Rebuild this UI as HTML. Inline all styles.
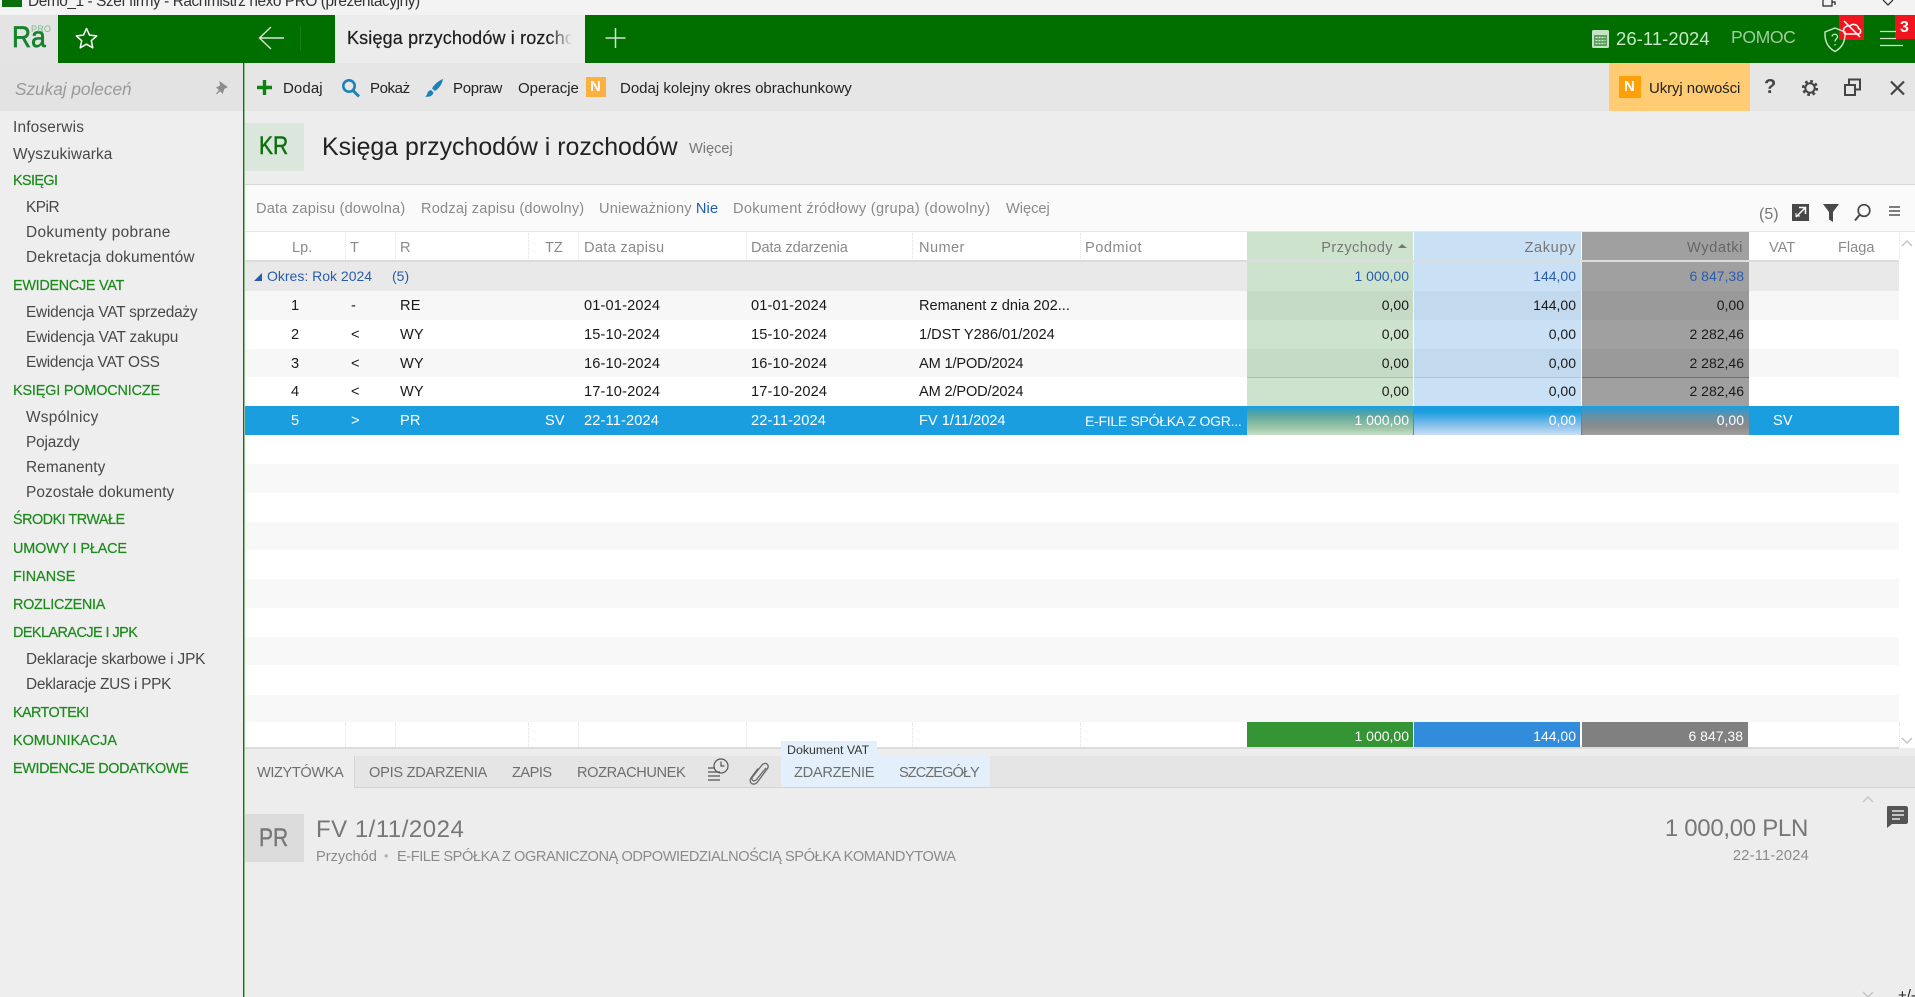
<!DOCTYPE html>
<html lang="pl">
<head>
<meta charset="utf-8">
<title>Księga przychodów i rozchodów</title>
<style>
html,body{margin:0;padding:0;width:1915px;height:997px;overflow:hidden;background:#ededed}
body{position:relative;font-family:"Liberation Sans",sans-serif}
.b{position:absolute}
.t{position:absolute;white-space:nowrap;line-height:20px;height:20px;font-size:15px}
.r{text-align:right}
.s{font-size:15.4px;color:#484848;left:26px}
.h{font-size:14.4px;color:#1c8a1c;left:13px;-webkit-text-stroke:.2px #1c8a1c}
.f{font-size:14.6px;color:#8a8a8a;top:199px}
.c{font-size:14.6px;color:#8a8a8a;top:238px}
.d{color:#1a1a1a;font-size:14.6px;letter-spacing:.15px}
.n{color:#1a1a1a;font-size:14px;text-align:right}
.w{color:#fff}
.g{color:#2a5cad;font-size:14px}
.k{font-size:14.6px;color:#6e6e6e;top:763px}
.sep{position:absolute;width:0;border-left:1px dotted #e2e2e2}
svg{position:absolute;left:0;top:0}
</style>
</head>
<body>
<!-- window title bar -->
<div class="b" style="left:0;top:0;width:1915px;height:15px;background:#f3f3f3;overflow:hidden">
  <div class="b" style="left:2px;top:-8px;width:20px;height:15px;background:#0a6f0a"></div>
  <div class="t" style="left:28px;top:-8px;font-size:15.4px;letter-spacing:-.42px;color:#333">Demo_1 - Szef firmy - Rachmistrz nexo PRO (prezentacyjny)</div>
</div>
<!-- green top bar -->
<div class="b" style="left:0;top:15px;width:1915px;height:48px;background:#006f00"></div>
<div class="b" style="left:0;top:15px;width:58px;height:48px;background:#e4e4e4"></div>
<div class="t" style="left:12px;top:22px;font-size:30px;line-height:31px;height:31px;color:#14852d;-webkit-text-stroke:.7px #14852d;transform:scaleX(.88);transform-origin:left center">Ra</div>
<div class="t" style="left:31px;top:24px;font-size:9px;line-height:10px;height:10px;letter-spacing:.2px;color:#7fba8c">PRO</div>
<div class="b" style="left:335px;top:15px;width:250px;height:48px;background:#ececec;overflow:hidden">
  <div class="t" style="left:12px;top:13px;font-size:18px;letter-spacing:.15px;color:#1d1d1d;-webkit-text-stroke:.2px #1d1d1d">Księga przychodów i rozchodów</div>
  <div class="b" style="left:214px;top:0;width:36px;height:48px;background:linear-gradient(90deg,rgba(236,236,236,0),#ececec 65%)"></div>
</div>
<div class="t" style="left:1616px;top:29px;font-size:18.4px;letter-spacing:.1px;color:#c8e8c8">26-11-2024</div>
<div class="t" style="left:1731px;top:27px;font-size:17.600px;letter-spacing:-.4px;color:#9ecb9e">POMOC</div>
<div class="b" style="left:1839px;top:15px;width:25px;height:25px;background:#f0141e"></div>
<div class="b" style="left:1895px;top:15px;width:20px;height:24px;background:#f0141e"></div>
<div class="t" style="left:1900px;top:18px;font-size:16px;font-weight:bold;color:#fff">3</div>

<!-- sidebar -->
<div class="b" style="left:0;top:63px;width:243px;height:934px;background:#eeeeee"></div>
<div class="b" style="left:0;top:63px;width:243px;height:48px;background:#e3e3e3"></div>
<div class="b" style="left:243px;top:63px;width:1px;height:934px;background:#0a780a"></div>
<div class="b" style="left:244px;top:63px;width:1px;height:934px;background:#8fbf8f"></div>
<div class="t" style="left:15px;top:79px;font-size:17.2px;font-style:italic;color:#9a9a9a">Szukaj poleceń</div>
<div class="t s" style="left:13px;top:118px;letter-spacing:.18px">Infoserwis</div>
<div class="t s" style="left:13px;top:145px;letter-spacing:.1px">Wyszukiwarka</div>
<div class="t h" style="top:171px;letter-spacing:-.6px">KSIĘGI</div>
<div class="t s" style="top:198px;letter-spacing:-.5px">KPiR</div>
<div class="t s" style="top:223px;letter-spacing:.36px">Dokumenty pobrane</div>
<div class="t s" style="top:248px;letter-spacing:.17px">Dekretacja dokumentów</div>
<div class="t h" style="top:276px;letter-spacing:-.28px">EWIDENCJE VAT</div>
<div class="t s" style="top:303px;letter-spacing:-.21px">Ewidencja VAT sprzedaży</div>
<div class="t s" style="top:328px;letter-spacing:-.18px">Ewidencja VAT zakupu</div>
<div class="t s" style="top:353px;letter-spacing:-.29px">Ewidencja VAT OSS</div>
<div class="t h" style="top:381px;letter-spacing:-.15px">KSIĘGI POMOCNICZE</div>
<div class="t s" style="top:408px;letter-spacing:.27px">Wspólnicy</div>
<div class="t s" style="top:433px;letter-spacing:-.17px">Pojazdy</div>
<div class="t s" style="top:458px;letter-spacing:.07px">Remanenty</div>
<div class="t s" style="top:483px;letter-spacing:.06px">Pozostałe dokumenty</div>
<div class="t h" style="top:510px;letter-spacing:-.5px">ŚRODKI TRWAŁE</div>
<div class="t h" style="top:539px;letter-spacing:-.14px">UMOWY I PŁACE</div>
<div class="t h" style="top:567px">FINANSE</div>
<div class="t h" style="top:595px;letter-spacing:-.28px">ROZLICZENIA</div>
<div class="t h" style="top:623px;letter-spacing:-.53px">DEKLARACJE I JPK</div>
<div class="t s" style="top:650px;letter-spacing:-.15px">Deklaracje skarbowe i JPK</div>
<div class="t s" style="top:675px;letter-spacing:-.27px">Deklaracje ZUS i PPK</div>
<div class="t h" style="top:703px;letter-spacing:-.6px">KARTOTEKI</div>
<div class="t h" style="top:731px">KOMUNIKACJA</div>
<div class="t h" style="top:759px;letter-spacing:-.35px">EWIDENCJE DODATKOWE</div>

<!-- toolbar -->
<div class="b" style="left:245px;top:63px;width:1670px;height:48px;background:#e6e6e6"></div>
<div class="t" style="left:283px;top:79px;color:#222;letter-spacing:.1px">Dodaj</div>
<div class="t" style="left:370px;top:79px;color:#222;letter-spacing:-.4px">Pokaż</div>
<div class="t" style="left:453px;top:79px;color:#222;letter-spacing:-.3px">Popraw</div>
<div class="t" style="left:518px;top:79px;color:#222">Operacje</div>
<div class="b" style="left:586px;top:77px;width:20px;height:20px;background:#fbb040"></div>
<div class="t" style="left:590px;top:77px;font-weight:bold;font-size:15px;color:#fff">N</div>
<div class="t" style="left:620px;top:79px;color:#222">Dodaj kolejny okres obrachunkowy</div>
<div class="b" style="left:1609px;top:63px;width:141px;height:48px;background:#ffcb73"></div>
<div class="b" style="left:1619px;top:76px;width:22px;height:22px;background:#ff9f0a"></div>
<div class="t" style="left:1624px;top:77px;font-weight:bold;font-size:15px;color:#fff">N</div>
<div class="t" style="left:1649px;top:79px;color:#222;font-size:15px;letter-spacing:-.1px">Ukryj nowości</div>
<div class="t" style="left:1764px;top:77px;color:#444;font-size:20px;font-weight:bold">?</div>

<!-- page header -->
<div class="b" style="left:245px;top:111px;width:1670px;height:73px;background:#ededed"></div>
<div class="b" style="left:245px;top:184px;width:1670px;height:1px;background:#d6d6d6"></div>
<div class="b" style="left:245px;top:123px;width:59px;height:48px;background:#dbe7dc"></div>
<div class="t" style="left:259px;top:136px;font-size:25px;color:#0e6f0e;-webkit-text-stroke:.5px #0e6f0e;transform:scaleX(.84);transform-origin:left center">KR</div>
<div class="t" style="left:322px;top:137px;font-size:24.9px;color:#222">Księga przychodów i rozchodów</div>
<div class="t" style="left:689px;top:139px;font-size:14.6px;color:#777">Więcej</div>

<!-- filter row -->
<div class="b" style="left:245px;top:185px;width:1670px;height:47px;background:#fafafa"></div>
<div class="t f" style="left:256px;letter-spacing:.2px">Data zapisu (dowolna)</div>
<div class="t f" style="left:421px;letter-spacing:.19px">Rodzaj zapisu (dowolny)</div>
<div class="t f" style="left:599px;letter-spacing:.15px">Unieważniony <span style="color:#1a5fb4">Nie</span></div>
<div class="t f" style="left:733px;letter-spacing:.31px">Dokument źródłowy (grupa) (dowolny)</div>
<div class="t f" style="left:1006px">Więcej</div>
<div class="t" style="left:1759px;top:205px;font-size:16px;color:#777">(5)</div>

<!-- table background -->
<div class="b" style="left:245px;top:232px;width:1670px;height:516px;background:#fff"></div>
<div class="b" style="left:245px;top:231px;width:1670px;height:1px;background:#e6e6e6"></div>
<div class="b" style="left:245px;top:261px;width:1654px;height:30px;background:#e9e9e9"></div>
<div class="b" style="left:245px;top:291px;width:1654px;height:29px;background:#f7f7f7"></div>
<div class="b" style="left:245px;top:349px;width:1654px;height:28px;background:#f7f7f7"></div>
<div class="b" style="left:245px;top:464px;width:1654px;height:29px;background:#f8f8f8"></div>
<div class="b" style="left:245px;top:522px;width:1654px;height:28px;background:#f8f8f8"></div>
<div class="b" style="left:245px;top:579px;width:1654px;height:29px;background:#f8f8f8"></div>
<div class="b" style="left:245px;top:637px;width:1654px;height:28px;background:#f8f8f8"></div>
<div class="b" style="left:245px;top:695px;width:1654px;height:27px;background:#f8f8f8"></div>

<!-- coloured columns -->
<div class="b" style="left:1247px;top:232px;width:166px;height:174px;background:#cde3cd"></div>
<div class="b" style="left:1414px;top:232px;width:167px;height:174px;background:#c9e0f5"></div>
<div class="b" style="left:1582px;top:232px;width:167px;height:174px;background:#a0a0a0"></div>
<div class="b" style="left:1247px;top:291px;width:166px;height:29px;background:#c5dbc5"></div>
<div class="b" style="left:1414px;top:291px;width:167px;height:29px;background:#c3d9ee"></div>
<div class="b" style="left:1582px;top:291px;width:167px;height:29px;background:#9a9a9a"></div>
<div class="b" style="left:1247px;top:349px;width:166px;height:28px;background:#c5dbc5"></div>
<div class="b" style="left:1414px;top:349px;width:167px;height:28px;background:#c3d9ee"></div>
<div class="b" style="left:1582px;top:349px;width:167px;height:28px;background:#9a9a9a"></div>
<div class="b" style="left:1247px;top:377px;width:166px;height:1px;background:#a5c4a5"></div>
<div class="b" style="left:1414px;top:377px;width:167px;height:1px;background:#a3c7ea"></div>
<div class="b" style="left:1582px;top:377px;width:167px;height:1px;background:#6e6e6e"></div>
<div class="b" style="left:245px;top:260px;width:1654px;height:2px;background:#dcdcdc"></div>

<!-- selected row -->
<div class="b" style="left:245px;top:406px;width:1654px;height:29px;background:#1a9ee0"></div>
<div class="b" style="left:1247px;top:406px;width:166px;height:29px;background:linear-gradient(#1a9ee0,#5aa59c 30%,#9cc6a8 75%,#c6dfc6)"></div>
<div class="b" style="left:1414px;top:406px;width:167px;height:29px;background:linear-gradient(#1a9ee0,#1a9ee0 20%,#8fc3ec 70%,#c9e0f5)"></div>
<div class="b" style="left:1582px;top:406px;width:167px;height:29px;background:linear-gradient(#1a9ee0,#5e91ab 30%,#8b8b8b 70%,#a0a0a0)"></div>

<!-- header separators -->
<div class="sep" style="left:345px;top:233px;height:26px"></div>
<div class="sep" style="left:395px;top:233px;height:26px"></div>
<div class="sep" style="left:528px;top:233px;height:26px"></div>
<div class="sep" style="left:578px;top:233px;height:26px"></div>
<div class="sep" style="left:746px;top:233px;height:26px"></div>
<div class="sep" style="left:912px;top:233px;height:26px"></div>
<div class="sep" style="left:1080px;top:233px;height:26px"></div>
<div class="sep" style="left:1899px;top:233px;height:26px"></div>
<div class="sep" style="left:345px;top:723px;height:24px"></div>
<div class="sep" style="left:395px;top:723px;height:24px"></div>
<div class="sep" style="left:528px;top:723px;height:24px"></div>
<div class="sep" style="left:578px;top:723px;height:24px"></div>
<div class="sep" style="left:746px;top:723px;height:24px"></div>
<div class="sep" style="left:912px;top:723px;height:24px"></div>
<div class="sep" style="left:1080px;top:723px;height:24px"></div>
<div class="sep" style="left:1899px;top:723px;height:24px"></div>

<!-- column headers -->
<div class="t c" style="left:292px">Lp.</div>
<div class="t c" style="left:350px">T</div>
<div class="t c" style="left:400px">R</div>
<div class="t c" style="left:545px">TZ</div>
<div class="t c" style="left:584px;letter-spacing:.3px">Data zapisu</div>
<div class="t c" style="left:751px;letter-spacing:-.1px">Data zdarzenia</div>
<div class="t c" style="left:919px;letter-spacing:.4px">Numer</div>
<div class="t c" style="left:1085px;letter-spacing:.5px">Podmiot</div>
<div class="t c r" style="right:522px;color:#777;letter-spacing:.4px">Przychody</div>
<div class="t c r" style="right:339px;color:#777;letter-spacing:.6px">Zakupy</div>
<div class="t c r" style="right:172px;color:#666;letter-spacing:.6px">Wydatki</div>
<div class="t c" style="left:1769px">VAT</div>
<div class="t c" style="left:1838px">Flaga</div>

<!-- group row -->
<div class="t g" style="left:267px;top:266px">Okres: Rok 2024</div>
<div class="t g" style="left:392px;top:266px">(5)</div>
<div class="t n" style="right:506px;top:266px;color:#2a5cad">1 000,00</div>
<div class="t n" style="right:339px;top:266px;color:#2a5cad">144,00</div>
<div class="t n" style="right:171px;top:266px;color:#2a5cad">6 847,38</div>

<!-- row 1 -->
<div class="t d" style="left:291px;top:296px">1</div>
<div class="t d" style="left:351px;top:296px">-</div>
<div class="t d" style="left:400px;top:296px">RE</div>
<div class="t d" style="left:584px;top:296px">01-01-2024</div>
<div class="t d" style="left:751px;top:296px">01-01-2024</div>
<div class="t d" style="left:919px;top:296px;letter-spacing:0">Remanent z dnia 202...</div>
<div class="t n" style="right:506px;top:295px">0,00</div>
<div class="t n" style="right:339px;top:295px">144,00</div>
<div class="t n" style="right:171px;top:295px">0,00</div>
<!-- row 2 -->
<div class="t d" style="left:291px;top:325px">2</div>
<div class="t d" style="left:351px;top:325px">&lt;</div>
<div class="t d" style="left:400px;top:325px">WY</div>
<div class="t d" style="left:584px;top:325px">15-10-2024</div>
<div class="t d" style="left:751px;top:325px">15-10-2024</div>
<div class="t d" style="left:919px;top:325px;letter-spacing:0">1/DST Y286/01/2024</div>
<div class="t n" style="right:506px;top:324px">0,00</div>
<div class="t n" style="right:339px;top:324px">0,00</div>
<div class="t n" style="right:171px;top:324px">2 282,46</div>
<!-- row 3 -->
<div class="t d" style="left:291px;top:354px">3</div>
<div class="t d" style="left:351px;top:354px">&lt;</div>
<div class="t d" style="left:400px;top:354px">WY</div>
<div class="t d" style="left:584px;top:354px">16-10-2024</div>
<div class="t d" style="left:751px;top:354px">16-10-2024</div>
<div class="t d" style="left:919px;top:354px;letter-spacing:-.15px">AM 1/POD/2024</div>
<div class="t n" style="right:506px;top:353px">0,00</div>
<div class="t n" style="right:339px;top:353px">0,00</div>
<div class="t n" style="right:171px;top:353px">2 282,46</div>
<!-- row 4 -->
<div class="t d" style="left:291px;top:382px">4</div>
<div class="t d" style="left:351px;top:382px">&lt;</div>
<div class="t d" style="left:400px;top:382px">WY</div>
<div class="t d" style="left:584px;top:382px">17-10-2024</div>
<div class="t d" style="left:751px;top:382px">17-10-2024</div>
<div class="t d" style="left:919px;top:382px;letter-spacing:-.15px">AM 2/POD/2024</div>
<div class="t n" style="right:506px;top:381px">0,00</div>
<div class="t n" style="right:339px;top:381px">0,00</div>
<div class="t n" style="right:171px;top:381px">2 282,46</div>
<!-- row 5 selected -->
<div class="t d w" style="left:291px;top:411px">5</div>
<div class="t d w" style="left:351px;top:411px">&gt;</div>
<div class="t d w" style="left:400px;top:411px">PR</div>
<div class="t d w" style="left:545px;top:411px">SV</div>
<div class="t d w" style="left:584px;top:411px">22-11-2024</div>
<div class="t d w" style="left:751px;top:411px">22-11-2024</div>
<div class="t d w" style="left:919px;top:411px;letter-spacing:0">FV 1/11/2024</div>
<div class="t d w" style="left:1085px;top:411px;font-size:14px;letter-spacing:-.28px">E-FILE SPÓŁKA Z OGR...</div>
<div class="t n w" style="right:506px;top:410px">1 000,00</div>
<div class="t n w" style="right:339px;top:410px">0,00</div>
<div class="t n w" style="right:171px;top:410px">0,00</div>
<div class="t d w" style="left:1773px;top:411px">SV</div>

<!-- footer totals -->
<div class="b" style="left:1247px;top:722px;width:166px;height:26px;background:#359534"></div>
<div class="b" style="left:1414px;top:722px;width:166px;height:26px;background:#318ddc"></div>
<div class="b" style="left:1582px;top:722px;width:166px;height:26px;background:#808080"></div>
<div class="t n w" style="right:506px;top:726px">1 000,00</div>
<div class="t n w" style="right:339px;top:726px">144,00</div>
<div class="t n w" style="right:172px;top:726px">6 847,38</div>
<div class="b" style="left:245px;top:747px;width:1654px;height:2px;background:#dcdcdc"></div>

<!-- bottom panel -->
<div class="b" style="left:245px;top:749px;width:1670px;height:248px;background:#ededed"></div>
<div class="b" style="left:245px;top:756px;width:1670px;height:31px;background:#e5e5e5"></div>
<div class="b" style="left:245px;top:787px;width:1670px;height:1px;background:#d4d4d4"></div>
<div class="b" style="left:245px;top:756px;width:110px;height:32px;background:#ededed;border-right:1px solid #d4d4d4;box-sizing:border-box"></div>
<div class="b" style="left:781px;top:756px;width:209px;height:31px;background:#e3f0fb"></div>
<div class="b" style="left:781px;top:741px;width:96px;height:15px;background:#e3f0fb"></div>
<div class="t" style="left:787px;top:740px;font-size:12.4px;color:#333">Dokument VAT</div>
<div class="t k" style="left:257px;letter-spacing:-.4px">WIZYTÓWKA</div>
<div class="t k" style="left:369px;letter-spacing:-.26px">OPIS ZDARZENIA</div>
<div class="t k" style="left:512px;letter-spacing:-.5px">ZAPIS</div>
<div class="t k" style="left:577px;letter-spacing:-.4px">ROZRACHUNEK</div>
<div class="t k" style="left:794px;letter-spacing:-.27px">ZDARZENIE</div>
<div class="t k" style="left:899px;letter-spacing:-.95px">SZCZEGÓŁY</div>
<div class="b" style="left:245px;top:814px;width:59px;height:48px;background:#dcdcdc"></div>
<div class="t" style="left:259px;top:828px;font-size:25px;color:#777;-webkit-text-stroke:.4px #777;transform:scaleX(.84);transform-origin:left center">PR</div>
<div class="t" style="left:316px;top:820px;font-size:24px;letter-spacing:.5px;color:#777">FV 1/11/2024</div>
<div class="t" style="left:316px;top:847px;font-size:14.6px;color:#8a8a8a">Przychód</div>
<div class="t" style="left:384px;top:846px;font-size:12px;color:#aaa">•</div>
<div class="t" style="left:397px;top:847px;font-size:14.6px;letter-spacing:-.44px;color:#8a8a8a">E-FILE SPÓŁKA Z OGRANICZONĄ ODPOWIEDZIALNOŚCIĄ SPÓŁKA KOMANDYTOWA</div>
<div class="t r" style="right:107px;top:819px;font-size:24px;letter-spacing:-.3px;color:#777">1 000,00 PLN</div>
<div class="t r" style="right:106px;top:846px;font-size:14.6px;letter-spacing:.25px;color:#8a8a8a">22-11-2024</div>
<div class="t" style="left:1898px;top:986px;font-size:15px;color:#222">+/-</div>

<!-- icons -->
<svg width="1915" height="997" viewBox="0 0 1915 997" fill="none">
  <!-- window controls -->
  <path d="M1823 0v6h9V0M1832 2h3v3" stroke="#222" stroke-width="1.2"/>
  <path d="M1883 0l5 5 5-5" stroke="#222" stroke-width="1.2"/>
  <!-- star -->
  <path d="M86.500 28.500l3 6.600 7.200.8-5.400 4.800 1.500 7.100-6.300-3.600-6.300 3.600 1.500-7.100-5.400-4.800 7.200-.8z" stroke="#fff" stroke-width="1.500" stroke-linejoin="round"/>
  <!-- back arrow / separator -->
  <path d="M284 38h-24M271 27l-11.500 11 11.500 11" stroke="#d5ead5" stroke-width="1.400"/>
  <path d="M300.500 26v25" stroke="#1a7d1a" stroke-width="1"/>
  <!-- plus tab -->
  <path d="M615.500 28v20M605.500 38h20" stroke="#cfe6cf" stroke-width="1.500"/>
  <!-- calendar -->
  <rect x="1592" y="30" width="17" height="18" rx="1.500" fill="#c4e2c4"/>
  <rect x="1594" y="35" width="13" height="11" fill="#5d9c5d"/>
  <path d="M1595.500 37.500h10M1595.500 40.500h10M1595.500 43.500h10" stroke="#d6ecd6" stroke-width="1.300" stroke-dasharray="2 1"/>
  <!-- shield -->
  <path d="M1835 28l10 4c.5 9-2.500 15.500-10 19.500-7.500-4-10.500-10.500-10-19.500z" stroke="#cfe6cf" stroke-width="1.400"/>
  <path d="M1832 36.500c.5-3 5.500-3 5.500.3 0 2.300-2.500 2.200-2.500 4.700M1835 44v1.500" stroke="#cfe6cf" stroke-width="1.300"/>
  <!-- crossed cloud -->
  <path d="M1846 34h12c3.500 0 3.500-5 .5-5.500-.5-4-6-5.500-8.500-2.500-3-.5-6.500 1-6.500 4.500 0 1.500 1 3.500 2.500 3.500z" stroke="#fff" stroke-width="1.500"/>
  <path d="M1844 21l16 16" stroke="#fff" stroke-width="1.500"/>
  <!-- hamburger -->
  <path d="M1880 31.500h16M1880 38.500h16M1880 45.500h23" stroke="#cfe6cf" stroke-width="1.300"/>
  <!-- pin -->
  <path d="M220 82l7 5-3 1.500-1.500 4.500-2.500-2.500-3.500 3.500 3-4-2.500-2.500 3.500-1.500z" fill="#8d8d8d" stroke="#8d8d8d" stroke-width="1"/>
  <!-- toolbar icons -->
  <path d="M264.500 80v15M257 87.500h15" stroke="#0f8212" stroke-width="3.400"/>
  <circle cx="349" cy="86" r="5.700" stroke="#1b82b8" stroke-width="2.600"/>
  <path d="M353 90.500l6 6" stroke="#1b82b8" stroke-width="3"/>
  <path d="M443 79c-4 1.500-8.500 5-11 9.500l3 2.500c4-2.500 7-6.500 8-12zM431 90c-3 .5-3.500 3-4 4.500-.5 1.200-1.500 1.800-2 2 3 .8 7.500.2 8.500-4z" fill="#1b82b8"/>
  <!-- right toolbar icons -->
  <circle cx="1810" cy="88" r="4.700" stroke="#444" stroke-width="2"/>
  <circle cx="1810" cy="88" r="6.800" stroke="#444" stroke-width="2.600" stroke-dasharray="2.700 2.640"/>
  <path d="M1849 84v-4.500h11v10h-5M1845 85h10v10h-10z" stroke="#444" stroke-width="2"/>
  <path d="M1891 81.500l13 13M1904 81.500l-13 13" stroke="#444" stroke-width="2.200"/>
  <!-- list toolbar icons -->
  <rect x="1792" y="204" width="17" height="17" fill="#484848"/>
  <path d="M1796 217l9-9M1799 207.500h6.500v6.500" stroke="#fff" stroke-width="1.500"/>
  <path d="M1797 216h3M1796 213v4" stroke="#fff" stroke-width="1"/>
  <path d="M1823 204h16l-6 8v10l-4-2.500v-7.500z" fill="#484848"/>
  <circle cx="1864" cy="210.500" r="5.800" stroke="#484848" stroke-width="1.700"/>
  <path d="M1859.500 215l-4.500 5.500" stroke="#484848" stroke-width="2"/>
  <path d="M1889 207h11M1889 211h11M1889 215h11" stroke="#555" stroke-width="1.400"/>
  <!-- sort and group triangles -->
  <path d="M1398 248l4-4 5 4z" fill="#777"/>
  <path d="M254 281h8v-8z" fill="#2a5cad"/>
  <!-- scrollbars -->
  <path d="M1902 246l5-5 5 5M1902 738l5 5 5-5" stroke="#c6c6c6" stroke-width="1.500"/>
  <path d="M1863 802l5-5 5 5M1863 992l5 5 5-5" stroke="#c6c6c6" stroke-width="1.500"/>
  <!-- tab icons -->
  <circle cx="721" cy="766" r="7" stroke="#555" stroke-width="1.200"/>
  <path d="M721 761.500v4.500h3.500" stroke="#555" stroke-width="1.200"/>
  <path d="M708 768h7M708 772h12M708 776h12M708 780h12" stroke="#555" stroke-width="1.300"/>
  <path d="M766 768l-9.500 11.500c-2.500 3-6 .5-4-2.500l9.500-12c3-3.500 8-.5 5.500 3.500l-10 13.500c-3.500 4.500-9.500 1-6.500-4l7-9.500" stroke="#666" stroke-width="1.300"/>
  <!-- comment -->
  <path d="M1888 806h18c1 0 2 1 2 2v14c0 1-1 2-2 2h-14l-5 4v-20c0-1 0-2 1-2z" fill="#555"/>
  <path d="M1892 811h12M1892 815h12M1892 819h8" stroke="#e6e6e6" stroke-width="1.600"/>
</svg>
</body>
</html>
